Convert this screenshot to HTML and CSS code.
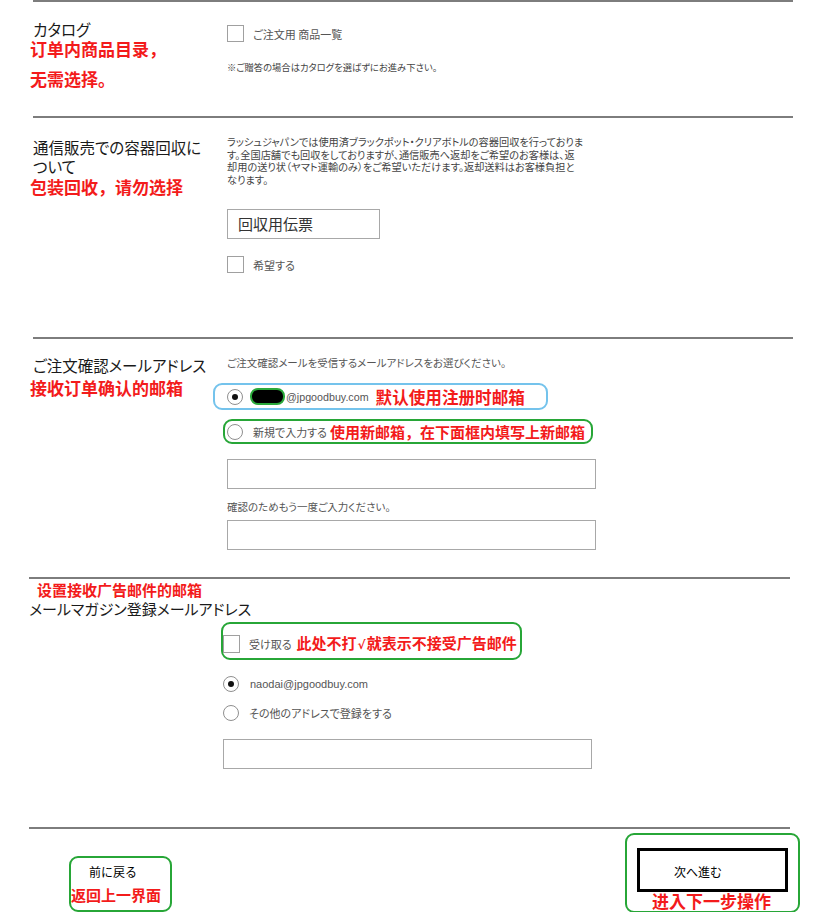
FILE: index.html
```html
<!DOCTYPE html>
<html lang="ja">
<head>
<meta charset="utf-8">
<title>ご注文手続き</title>
<link rel="stylesheet" href="styles.css">
</head>
<body>
<main class="page">

  <section class="sec sec-catalog">
    <div class="label">
      <h2 class="title">カタログ</h2>
      <p class="memo memo-cat1">订单内商品目录，</p>
      <p class="memo memo-cat2">无需选择。</p>
    </div>
    <div class="field">
      <label class="check-row"><input type="checkbox" class="cb"><span class="opt">ご注文用 商品一覧</span></label>
      <p class="note">※ご贈答の場合はカタログを選ばずにお進み下さい。</p>
    </div>
  </section>

  <section class="sec sec-return">
    <div class="label">
      <h2 class="title title-wrap">通信販売での容器回収に<br>ついて</h2>
      <p class="memo">包装回收，请勿选择</p>
    </div>
    <div class="field">
      <p class="para">ラッシュジャパンでは使用済ブラックポット・クリアボトルの容器回収を行っておりま<br>す。全国店舗でも回収をしておりますが、通信販売へ返却をご希望のお客様は、返<br>却用の送り状（ヤマト運輸のみ）をご希望いただけます。返却送料はお客様負担と<br>なります。</p>
      <div class="slip">回収用伝票</div>
      <label class="check-row check-hope"><input type="checkbox" class="cb"><span class="opt">希望する</span></label>
    </div>
  </section>

  <section class="sec sec-order">
    <div class="label">
      <h2 class="title">ご注文確認メールアドレス</h2>
      <p class="memo memo-order">接收订单确认的邮箱</p>
    </div>
    <div class="field">
      <p class="intro">ご注文確認メールを受信するメールアドレスをお選びください。</p>
      <label class="mark mark-blue">
        <input type="radio" name="order-mail" class="rd" checked>
        <span class="blob" aria-hidden="true"></span><span class="addr">@jpgoodbuy.com</span>
        <span class="memo memo-inline">默认使用注册时邮箱</span>
      </label>
      <label class="mark mark-green mark-new">
        <input type="radio" name="order-mail" class="rd">
        <span class="opt opt-new">新規で入力する</span>
        <span class="memo memo-new">使用新邮箱，在下面框内填写上新邮箱</span>
      </label>
      <input type="text" class="txt txt-first">
      <p class="intro intro-confirm">確認のためもう一度ご入力ください。</p>
      <input type="text" class="txt txt-confirm">
    </div>
  </section>

  <section class="sec-mag">
    <p class="memo memo-mag">设置接收广告邮件的邮箱</p>
    <h2 class="title title-mag">メールマガジン登録メールアドレス</h2>
    <div class="mag-body">
      <label class="mark mark-green mark-receive">
        <input type="checkbox" class="cb">
        <span class="opt opt-receive">受け取る</span>
        <span class="memo memo-receive">此处不打<span class="tick">√</span>就表示不接受广告邮件</span>
      </label>
      <label class="radio-row radio-first"><input type="radio" name="mag" class="rd" checked><span class="addr addr-mag">naodai@jpgoodbuy.com</span></label>
      <label class="radio-row radio-second"><input type="radio" name="mag" class="rd"><span class="opt opt-other">その他のアドレスで登録をする</span></label>
      <input type="text" class="txt txt-mag">
    </div>
  </section>

  <footer class="foot">
    <div class="mark mark-green back-box">
      <button type="button" class="btn-back">前に戻る</button>
      <p class="memo memo-back">返回上一界面</p>
    </div>
    <div class="mark mark-green next-box">
      <button type="button" class="btn-next">次へ進む</button>
      <p class="memo memo-next">进入下一步操作</p>
    </div>
  </footer>

</main>
</body>
</html>
```

FILE: styles.css
```css
* { box-sizing: border-box; }

body {
  margin: 0;
  background: #fff;
  font-family: "Noto Sans CJK JP", "Noto Sans", sans-serif;
  font-feature-settings: "palt";
  color: #444;
  overflow: hidden;
}

p, h2 { margin: 0; }

.page { width: 836px; }

/* ---------- sections ---------- */
.sec {
  display: grid;
  grid-template-columns: 194px 1fr;
  align-items: start;
  margin-left: 33px;
  width: 760px;
  border-top: 2px solid #7d7d7d;
}
.sec-catalog { height: 116px; }
.sec-return  { height: 221px; }
.sec-order   { height: 240px; }

.title {
  font-size: 15.5px;
  line-height: 20px;
  font-weight: 400;
  color: #1a1a1a;
  white-space: nowrap;
}

.memo {
  font-family: "Noto Sans CJK SC", "Noto Sans CJK JP", sans-serif;
  font-feature-settings: normal;
  font-weight: 700;
  color: #f31b1b;
  font-size: 17px;
  line-height: 22px;
  white-space: nowrap;
}

/* catalog */
.sec-catalog .label { padding-top: 17px; }
.memo-cat1, .memo-cat2 { line-height: 20px; margin-left: -3px; }
.memo-cat2 { margin-top: 10px; }
.sec-catalog .field { padding-top: 23px; }

.check-row { display: flex; align-items: center; }

.cb {
  appearance: none;
  -webkit-appearance: none;
  display: block;
  width: 17px;
  height: 17px;
  margin: 0;
  border: 1px solid #a0a0a0;
  border-radius: 0;
  background: #fff;
  flex: none;
}

.rd {
  appearance: none;
  -webkit-appearance: none;
  display: grid;
  place-items: center;
  width: 16px;
  height: 16px;
  margin: 0;
  border: 1px solid #8f8f8f;
  border-radius: 50%;
  background: #fff;
  flex: none;
}
.rd:checked::after {
  content: "";
  width: 6px;
  height: 6px;
  border-radius: 50%;
  background: #111;
}

.opt {
  font-size: 11px;
  line-height: 14px;
  color: #555;
  margin-left: 9px;
  white-space: nowrap;
}

.note {
  margin-top: 18px;
  font-size: 9.3px;
  line-height: 14px;
  color: #444;
}

/* container return */
.sec-return .label { padding-top: 20px; }
.title-wrap { line-height: 19px; }
.sec-return .label .memo { margin-left: -3px; }
.sec-return .field { padding-top: 18px; }

.para {
  font-size: 10.2px;
  line-height: 12.5px;
  color: #444;
  white-space: nowrap;
}

.slip {
  margin-top: 23px;
  width: 153px;
  height: 30px;
  border: 1px solid #a8a8a8;
  padding-left: 10px;
  font-size: 15px;
  line-height: 28px;
  color: #333;
}

.check-hope { margin-top: 17px; }

/* order mail */
.sec-order .label { padding-top: 16px; }
.memo-order { line-height: 26px; margin-left: -3px; }
.sec-order .field { padding-top: 17px; }

.intro {
  font-size: 10.5px;
  line-height: 14px;
  color: #555;
  white-space: nowrap;
}

.mark {
  display: flex;
  align-items: center;
  border: 2px solid #27a637;
  border-radius: 9px;
}
.mark-blue {
  border-color: #74c3ec;
  margin-top: 13px;
  margin-left: -14px;
  width: 335px;
  height: 27px;
  padding-left: 12px;
}

.blob {
  width: 35px;
  height: 17px;
  margin-left: 7px;
  background: #000;
  border: 2px solid #2aa83a;
  border-radius: 8px;
  flex: none;
}

.addr {
  font-family: "Liberation Sans", Arial, sans-serif;
  font-size: 10.7px;
  line-height: 14px;
  color: #555;
  margin-left: 1px;
}

.memo-inline { margin-left: 7px; font-size: 16.6px; line-height: 20px; }

.mark-new {
  margin-top: 9px;
  margin-left: -4px;
  width: 370px;
  height: 25px;
  padding-left: 2px;
}
.opt-new { margin-left: 10px; }
.memo-new { margin-left: 3px; font-size: 15px; line-height: 20px; }

.txt {
  display: block;
  width: 369px;
  height: 30px;
  margin: 0;
  border: 1px solid #a8a8a8;
  border-radius: 0;
  background: #fff;
  padding: 0 8px;
  font: inherit;
}
.txt-first { margin-top: 15px; }
.intro-confirm { margin-top: 11px; }
.txt-confirm { margin-top: 6px; }

/* mail magazine */
.sec-mag {
  margin-left: 29px;
  width: 761px;
  height: 250px;
  border-top: 2px solid #7d7d7d;
}
.memo-mag {
  margin-left: 8px;
  padding-top: 1px;
  font-size: 15px;
  line-height: 20px;
}
.title-mag {
  font-size: 15px;
  line-height: 18px;
}

.mag-body { padding-left: 194px; }

.mark-receive {
  margin-top: 4px;
  margin-left: -2px;
  width: 301px;
  height: 38px;
  padding-top: 5px;
}
.mark-receive .cb { height: 18px; }
.opt-receive { margin-left: 9px; }
.memo-receive { margin-left: 5px; font-size: 15px; line-height: 20px; }
.tick {
  font-family: "DejaVu Sans", sans-serif;
  font-weight: 700;
  font-size: 12px;
  margin: 0 1px;
}

.radio-row { display: flex; align-items: center; }
.radio-first { margin-top: 16px; }
.radio-second { margin-top: 13px; }
.addr-mag { margin-left: 11px; font-size: 11px; }
.opt-other { margin-left: 10px; }
.txt-mag { margin-top: 18px; }

/* footer */
.foot {
  margin-left: 29px;
  width: 761px;
  border-top: 2px solid #7d7d7d;
  display: flex;
  justify-content: space-between;
  align-items: flex-start;
}

.back-box {
  display: block;
  margin-left: 40px;
  margin-top: 27px;
  width: 103px;
  height: 56px;
  padding-top: 5px;
}

.btn-back {
  display: block;
  margin: 0 0 0 18px;
  padding: 0;
  border: 0;
  background: none;
  font-family: "Noto Sans CJK JP", sans-serif;
  font-size: 12px;
  line-height: 18px;
  color: #000;
  cursor: pointer;
}

.memo-back {
  margin-top: 4px;
  font-size: 15px;
  line-height: 20px;
}

.next-box {
  display: block;
  margin-top: 4px;
  margin-right: -10px;
  width: 175px;
  height: 80px;
  padding: 13px 0 0 10px;
}

.btn-next {
  display: block;
  width: 151px;
  height: 44px;
  margin: 0;
  padding: 4px 0 0 34px;
  border: 3px solid #000;
  background: #fff;
  text-align: left;
  font-family: "Noto Sans CJK JP", sans-serif;
  font-size: 12px;
  line-height: 30px;
  color: #000;
  cursor: pointer;
}

.memo-next {
  margin-left: 15px;
  font-size: 17px;
  line-height: 18px;
}
```
